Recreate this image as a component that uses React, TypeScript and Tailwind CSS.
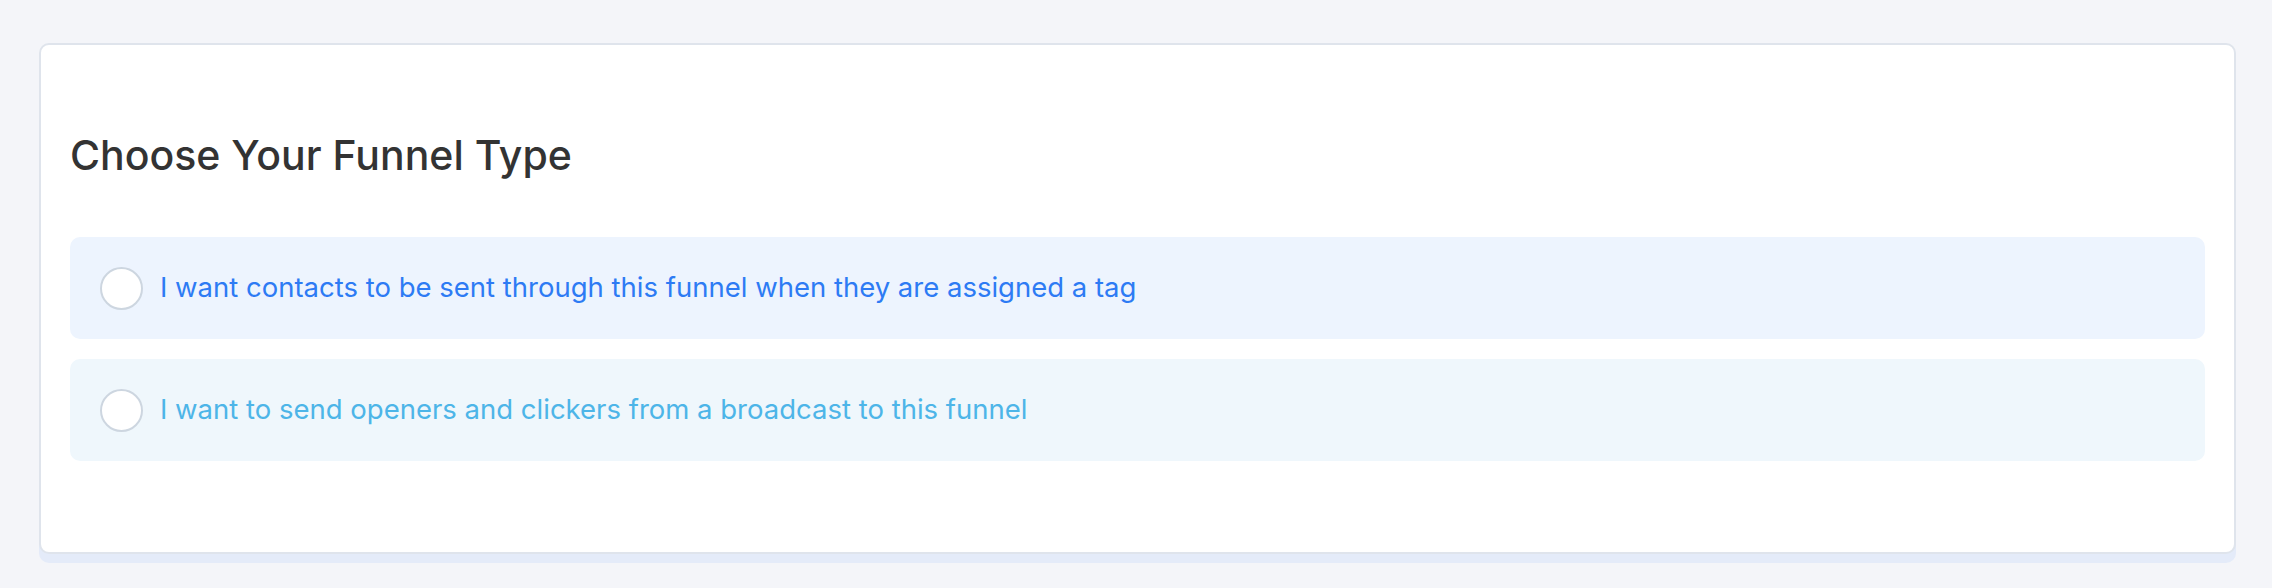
import React from "react"

const options = [
  {
    label: "I want contacts to be sent through this funnel when they are assigned a tag",
    box: "bg-[#edf4fe]",
    text: "text-[#2d7bf4]",
  },
  {
    label: "I want to send openers and clickers from a broadcast to this funnel",
    box: "bg-[#eff7fc]",
    text: "text-[#4db5e8]",
  },
]

export default function App() {
  return (
    <div className="min-h-[588px] bg-[#f4f5f9] pl-[39px] pr-[36px] pt-[43px] font-['Inter',sans-serif]">
      <div className="rounded-[10px] border-2 border-[#dfe4ec] bg-white px-[29px] pt-[86px] pb-[91px] shadow-[0_9px_0_0_#e4ebf9]">
        <h2 className="text-[41px] leading-[48px] font-medium text-[#333333]">Choose Your Funnel Type</h2>
        <div className="mt-[58px] flex flex-col gap-[20px]">
          {options.map((o) => (
            <label key={o.label} className={`flex h-[102px] items-center gap-[17px] rounded-[10px] pl-[30px] ${o.box}`}>
              <span className="h-[43px] w-[43px] shrink-0 rounded-full border-2 border-[#cdd6e0] bg-white" />
              <span className={`text-[27.5px] ${o.text}`}>{o.label}</span>
            </label>
          ))}
        </div>
      </div>
    </div>
  )
}
